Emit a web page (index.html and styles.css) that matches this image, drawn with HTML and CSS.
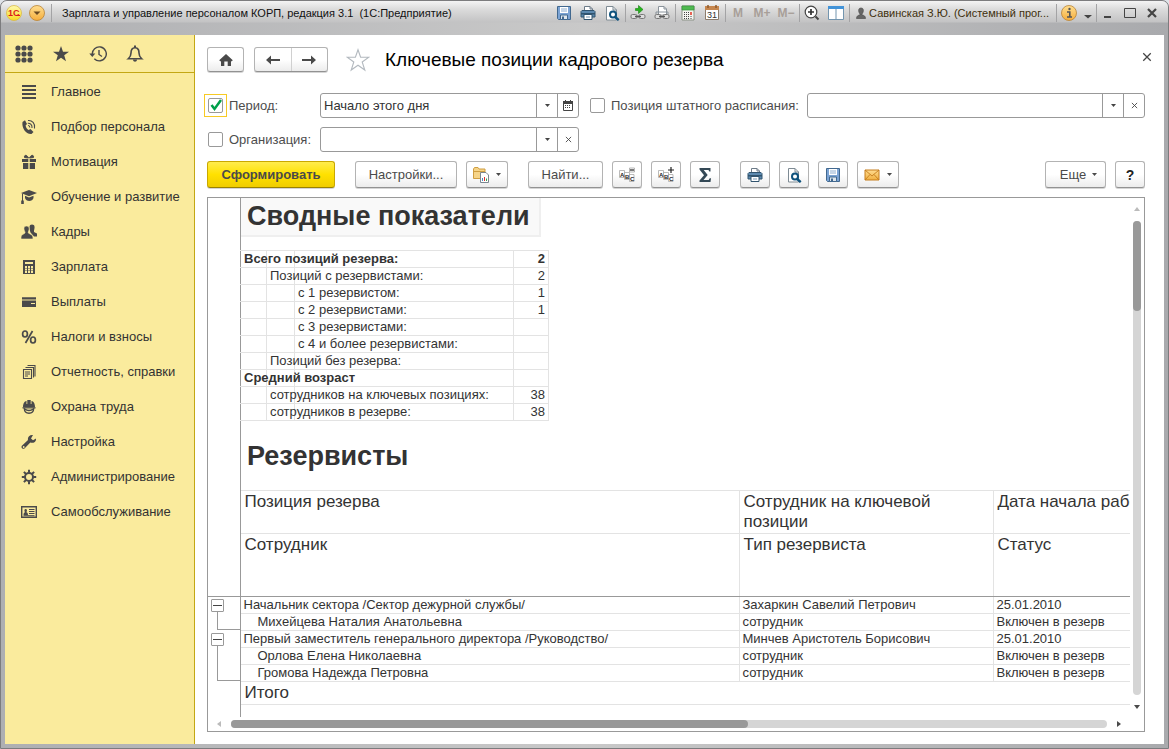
FILE: index.html
```html
<!DOCTYPE html>
<html lang="ru">
<head>
<meta charset="utf-8">
<title>Ключевые позиции кадрового резерва</title>
<link rel="stylesheet" href="styles.css">
</head>
<body>
<svg class="defs" aria-hidden="true">
  <defs>
    <linearGradient id="g-yellow" x2="0" y2="1"><stop offset="0" stop-color="#fffbb0"/><stop offset="1" stop-color="#f8d920"/></linearGradient>
    <linearGradient id="g-orange" x2="0" y2="1"><stop offset="0" stop-color="#ffdf91"/><stop offset="1" stop-color="#f5ad3c"/></linearGradient>
    <linearGradient id="g-mail" x2="0" y2="1"><stop offset="0" stop-color="#ffdc91"/><stop offset="1" stop-color="#f0b040"/></linearGradient>
  </defs>
  <symbol id="i-save" viewBox="0 0 16 16"><path d="M1.5 1.5h13v13h-12l-1-1z" fill="#7ba3d4" stroke="#41688f"/><path d="M4 2h8v6H4z" fill="#fff"/><path d="M5 4h6M5 6h6" stroke="#8daccf"/><path d="M4.500 10h7v4.500h-7z" fill="#dfe6ec" stroke="#41688f"/><path d="M6 11.500h2V14H6z" fill="#41688f"/></symbol>
  <symbol id="i-print" viewBox="0 0 16 16"><path d="M4.500 6V1.500H10L12.500 4v2" fill="#fff" stroke="#6c7b88"/><path d="M10 1.500V4h2.500" fill="none" stroke="#6c7b88"/><path d="M2 5.500h12l1 1V12H1V6.500z" fill="#5d8ab0" stroke="#31546f"/><path d="M1 8h14v1.500H1z" fill="#31546f"/><path d="M4 9.500h8v5H4z" fill="#fff" stroke="#31546f"/><path d="M6 12h4" stroke="#7b99b3"/></symbol>
  <symbol id="i-preview" viewBox="0 0 16 16"><path d="M2.500 15V1.500H9L12.500 5v10z" fill="#fff" stroke="#7e8b94"/><path d="M9 1.500V5h3.500" fill="none" stroke="#7e8b94"/><circle cx="9" cy="9.500" r="3" fill="#fff" stroke="#0e527d" stroke-width="2"/><path d="M11.200 12l3.500 3.200" stroke="#0e527d" stroke-width="2.400"/></symbol>
  <symbol id="i-link" viewBox="0 0 16 16"><rect x="1" y="9.500" width="6" height="4" rx="1.500" fill="#ddd" stroke="#777"/><rect x="9" y="9.500" width="6" height="4" rx="1.500" fill="#ddd" stroke="#777"/><path d="M5 11.500h6" stroke="#555" stroke-width="1.500"/></symbol>
  <symbol id="i-golink" viewBox="0 0 16 16"><path d="M5.500 3.500h3v-3l4.500 4-4.500 4v-3h-3z" fill="#25b51c" stroke="#168010" stroke-width=".6"/><use href="#i-link"/></symbol>
  <symbol id="i-doclink" viewBox="0 0 16 16"><path d="M4.500 9V1.500H10L12.500 4v5" fill="#fff" stroke="#8a939b"/><path d="M10 1.500V4h2.500M2 9.500V7h12v2.500" fill="none" stroke="#8a939b"/><use href="#i-link"/></symbol>
  <symbol id="i-calc" viewBox="0 0 16 16"><path d="M2 1h12v14H2z" fill="#f5f5f0" stroke="#8c9488"/><path d="M2 1h12v4H2z" fill="#4fba50" stroke="#3b9440" stroke-width=".7"/><path d="M4 7.500h5M4 9.500h5M4 11.500h5M4 13.500h5" stroke="#444" stroke-dasharray="1 1"/><path d="M11 7v3" stroke="#e03322" stroke-width="1.500"/><path d="M11 11v3" stroke="#444" stroke-dasharray="1 1"/></symbol>
  <symbol id="i-zoomin" viewBox="0 0 16 16"><circle cx="7" cy="7" r="5.800" fill="#fff" stroke="#444" stroke-width="1.200"/><path d="M4 7h6M7 4v6" stroke="#333" stroke-width="1.700"/><path d="M11.500 11.500l3 3" stroke="#444" stroke-width="2"/></symbol>
  <symbol id="i-split" viewBox="0 0 16 16"><path d="M.5 1.500h15v13H.5z" fill="#fff" stroke="#7395af"/><path d="M0 1h16v3H0z" fill="#4293d8"/><path d="M8 4v10.500" stroke="#7395af"/></symbol>
  <symbol id="i-user" viewBox="0 0 10 12"><path d="M5 1c3.500 0 2.500 4.500 1 6v1c2 .3 3.500 1 3.500 3.500H.5C.5 9 2 8.300 4 8V7C2.500 5.500 1.500 1 5 1z" fill="#666" stroke="#444" stroke-width=".6"/></symbol>
  <symbol id="i-grid" viewBox="0 0 18 18"><g fill="#4a4a4a"><circle cx="3" cy="3" r="2.600"/><circle cx="9" cy="3" r="2.600"/><circle cx="15" cy="3" r="2.600"/><circle cx="3" cy="9" r="2.600"/><circle cx="9" cy="9" r="2.600"/><circle cx="15" cy="9" r="2.600"/><circle cx="3" cy="15" r="2.600"/><circle cx="9" cy="15" r="2.600"/><circle cx="15" cy="15" r="2.600"/></g></symbol>
  <symbol id="i-star" viewBox="0 0 18 18"><path d="M9 1l2 5.700h6l-4.800 3.600L14 16.300 9 12.800l-5 3.500 1.800-6L1 6.700h6z" fill="#4a4a4a"/></symbol>
  <symbol id="i-history" viewBox="0 0 18 18"><path d="M3.300 9.500a7 7 0 1 1 2 4.300" fill="none" stroke="#4a4a4a" stroke-width="1.400"/><path d="M.3 8.500h6L3.300 12z" fill="#4a4a4a"/><path d="M10 5v4.500l3 2" fill="none" stroke="#4a4a4a" stroke-width="1.400"/></symbol>
  <symbol id="i-bell" viewBox="0 0 18 18"><path d="M9 2.700C5.500 2.700 5 5.500 5 8c0 3-1 4.300-2.700 5.800h13.400C14 12.300 13 11 13 8c0-2.500-.5-5.300-4-5.300z" fill="none" stroke="#4a4a4a" stroke-width="1.600"/><path d="M9 .5v2.500" stroke="#4a4a4a" stroke-width="2"/><path d="M7 14.500h4c0 3-4 3-4 0z" fill="#4a4a4a"/></symbol>
  <symbol id="i-lines" viewBox="0 0 16 16"><path d="M1 2h14M1 6h14M1 10h14M1 14h14" stroke="#4a4a4a" stroke-width="1.800"/></symbol>
  <symbol id="i-phone" viewBox="0 0 16 16"><path d="M1.500 3L4 1.300 6 5 4.600 6.500c.4 2 1.400 3.500 3 4.600L9.500 10l3 3-2 2C5 15.500.5 9 1.500 3z" fill="#4a4a4a"/><path d="M7 1.500c4-.5 7.500 3 6.500 8M6.800 4.200c2.500-.2 4.600 1.900 4.200 4.800M7 6.500c1 0 1.800.8 1.800 2" fill="none" stroke="#4a4a4a" stroke-width="1.100"/></symbol>
  <symbol id="i-gift" viewBox="0 0 16 16"><path d="M1 5h6.300v3H1zM8.700 5H15v3H8.700zM2 9h5.300v6H2zM8.700 9H14v6H8.700z" fill="#4a4a4a"/><path d="M7.500 4C6 .5 3 .5 3.500 3.500zM8.500 4c1.500-3.500 4.500-3.500 4-.5z" fill="#4a4a4a" stroke="#4a4a4a"/></symbol>
  <symbol id="i-cap" viewBox="0 0 16 16"><path d="M8 1l8 3-8 3.200L0 4z" fill="#4a4a4a"/><path d="M4 6.800L8 8.500l4.500-1.700V9c-1 4-7.500 4-8.500 0z" fill="#4a4a4a"/><path d="M1.500 4.500V12" stroke="#4a4a4a"/><path d="M.2 11.500h2.600V15H.2z" fill="#4a4a4a"/></symbol>
  <symbol id="i-people" viewBox="0 0 16 16"><path d="M9.500 8.500C8 4 8 .5 11 .5s3 3 2 6v1.500l3 1.500v3h-3z" fill="#4a4a4a"/><path d="M5.500 2c3 0 3.200 3 1.800 6v1l3.500 2c.8.500 1.200 2 1.200 4H0c0-2 .2-3.500 1-4l3-2V8C2.400 5 2.500 2 5.500 2z" fill="#4a4a4a" stroke="#faeb9d" stroke-width=".6"/></symbol>
  <symbol id="i-calculator" viewBox="0 0 16 16"><path d="M2 1h12v14H2z" fill="#4a4a4a"/><path d="M4 3h8v2H4zM4 7h2v2H4zM7 7h2v2H7zM10 7h2v2h-2zM4 9.500h2v2H4zM7 9.500h2v2H7zM10 9.500h2v2h-2zM4 12h2v2H4zM7 12h2v2H7zM10 12h2v2h-2z" fill="#faeb9d"/></symbol>
  <symbol id="i-card" viewBox="0 0 16 16"><path d="M1 3.200h14v2.300H1zM1 6.500h14V13H1z" fill="#4a4a4a"/><path d="M10 9.500h4" stroke="#faeb9d"/></symbol>
  <symbol id="i-percent" viewBox="0 0 16 16"><g fill="none" stroke="#4a4a4a" stroke-width="1.700"><ellipse cx="4" cy="5" rx="2.400" ry="3"/><ellipse cx="12" cy="11" rx="2.400" ry="3"/><path d="M11.500 2l-7 12"/></g></symbol>
  <symbol id="i-docs" viewBox="0 0 16 16"><path d="M2.500 5.500h8v9h-8zM4.500 3.500h8v10M6.500 1.500h7.500v11" fill="none" stroke="#4a4a4a" stroke-width="1.100"/><path d="M4 8h5M4 10h5M4 12h3" stroke="#4a4a4a"/></symbol>
  <symbol id="i-helmet" viewBox="0 0 16 16"><path d="M2 8c0-4 2-6 3.500-6v3h.8V1h3.400v4h.8V2C12 2 14 4 14 8z" fill="#4a4a4a"/><path d="M1.500 8.800h13" stroke="#4a4a4a" stroke-width="1.300"/><path d="M3.200 9c.3 7 9.300 7 9.600 0M4 10c2 2 6 2 8 0" fill="none" stroke="#4a4a4a" stroke-width="1.300"/></symbol>
  <symbol id="i-wrench" viewBox="0 0 16 16"><path d="M15 4.500l-3 1.700-2-1.800L12 1C8.500.5 6.300 3 7 6L.9 11.800c-1.300 1.600.8 4 2.600 2.700L9.300 8.600c3.200.9 6.200-1 5.700-4.100z" fill="#4a4a4a"/><circle cx="2.700" cy="13" r=".9" fill="#faeb9d"/></symbol>
  <symbol id="i-gear" viewBox="0 0 16 16"><circle cx="8" cy="8" r="4" fill="none" stroke="#4a4a4a" stroke-width="2"/><path d="M8 .8v3M8 12.200v3M.8 8h3M12.200 8h3M2.900 2.900L5 5M11 11l2.100 2.100M2.900 13.100L5 11M11 5l2.100-2.100" stroke="#4a4a4a" stroke-width="2"/></symbol>
  <symbol id="i-id" viewBox="0 0 16 16"><path d="M.7 2.700h14.600v10.600H.7z" fill="none" stroke="#4a4a4a" stroke-width="1.400"/><path d="M2.500 11c0-2 .8-2.500 1.500-2.700C3 6.500 3.300 5 4.700 5S6.400 6.500 5.400 8.300c.8.200 1.600.7 1.600 2.700z" fill="#4a4a4a"/><path d="M8 5.500h5.500M8 7.500h5.500M8 9.500h5.500M2.500 11.700h11" stroke="#4a4a4a"/></symbol>
  <symbol id="i-home" viewBox="0 0 16 16"><path d="M8 2l6.800 6.300-1.300 1.200-.5-.4V14H9.700V9.500H6.300V14H3V9.100l-.5.4-1.300-1.200z" fill="#4a4a4a"/></symbol>
  <symbol id="i-left" viewBox="0 0 16 16"><path d="M1 8l5-4.500V7h9v2H6v3.500z" fill="#4a4a4a"/></symbol>
  <symbol id="i-right" viewBox="0 0 16 16"><path d="M15 8l-5-4.500V7H1v2h9v3.500z" fill="#4a4a4a"/></symbol>
  <symbol id="i-fav" viewBox="0 0 24 24"><path d="M12 1.800l2.600 7.500h8.200L16.200 14l2.600 8L12 17.200 5.200 22l2.600-8L1.200 9.300h8.200z" fill="#fff" stroke="#b3b9bf" stroke-width="1.100"/></symbol>
  <symbol id="i-x" viewBox="0 0 8 8"><path d="M1 1l6 6M7 1L1 7" stroke="currentColor" fill="none"/></symbol>
  <symbol id="i-down" viewBox="0 0 5 3"><path d="M0 0h5L2.500 3z" fill="currentColor"/></symbol>
  <symbol id="i-calendar" viewBox="0 0 10 11"><path d="M.5 1.500h9v9h-9z" fill="#fff" stroke="#444"/><path d="M0 1h10v3H0z" fill="#444"/><path d="M2.500 0v2M7.500 0v2" stroke="#444"/><path d="M2 5.500h6M2 7.500h6" stroke="#444" stroke-dasharray="1 1"/></symbol>
  <symbol id="i-variant" viewBox="0 0 16 16"><path d="M.5 11.500V2l1-1.500H5l1 1.500h6v9.500z" fill="#f6d488" stroke="#cf9e42"/><path d="M.5 4.500h11.500" stroke="#cf9e42"/><path d="M7.500 5.500h5.500l2.500 2.500v7.500h-8z" fill="#fff" stroke="#7b8790"/><path d="M9.500 14v-3" stroke="#4b8cc4"/><path d="M11.500 14v-4" stroke="#d33"/><path d="M13.500 14v-2.500" stroke="#3a9d46"/></symbol>
  <symbol id="i-sum" viewBox="0 0 16 16"><path d="M2.500 1h11v3.500h-1.200L11.500 3H6.700l4 5-4.200 5h5.200l1-1.700h1.300L13.500 15h-11v-1.500L7 8.200 2.500 2.600z" fill="#344956"/></symbol>
  <symbol id="i-mail" viewBox="0 0 16 12"><path d="M1 1h14v10H1z" fill="url(#g-mail)" stroke="#c47c1c"/><path d="M1 1l7 6 7-6M1 11l5-5.500M15 11l-5-5.500" fill="none" stroke="#c47c1c" stroke-width=".9"/></symbol>
</svg>
<div class="window">
  <header class="titlebar">
    <button class="round" aria-label="Меню приложения"><svg width="16" height="16" viewBox="0 0 16 16"><circle cx="8" cy="8" r="7.500" fill="url(#g-yellow)" stroke="#d9b53a" stroke-width=".7"/><text x="2" y="11" class="svg-logo">1С</text><path d="M10 10.500h4" stroke="#dc1b1b"/></svg></button>
    <button class="round" aria-label="Главное меню"><svg width="16" height="16" viewBox="0 0 16 16"><circle cx="8" cy="8" r="7.500" fill="url(#g-orange)" stroke="#b98335" stroke-width=".8"/><path d="M4.500 6.500h7L8 10z" fill="#6b4a22"/></svg></button>
    <i class="sep"></i>
    <span class="app-title">Зарплата и управление персоналом КОРП, редакция 3.1&nbsp; (1С:Предприятие)</span>
    <div class="tools">
      <button class="tool" aria-label="Сохранить"><svg width="16" height="16"><use href="#i-save"/></svg></button>
      <button class="tool" aria-label="Печать"><svg width="16" height="16"><use href="#i-print"/></svg></button>
      <button class="tool" aria-label="Просмотр"><svg width="16" height="16"><use href="#i-preview"/></svg></button>
      <i class="sep"></i>
      <button class="tool" aria-label="Перейти по ссылке"><svg width="16" height="16"><use href="#i-golink"/></svg></button>
      <button class="tool" aria-label="Получить ссылку"><svg width="16" height="16"><use href="#i-doclink"/></svg></button>
      <i class="sep"></i>
      <button class="tool" aria-label="Калькулятор"><svg width="16" height="16"><use href="#i-calc"/></svg></button>
      <button class="tool" aria-label="Календарь"><svg width="16" height="16" viewBox="0 0 16 16"><path d="M1.500 2.500h13v12h-13z" fill="#fff" stroke="#8c7c6c"/><path d="M1 1h14v4H1z" fill="#c6864e"/><path d="M4 0v3M12 0v3" stroke="#8a5a2f" stroke-width="1.500"/><text x="8" y="13" text-anchor="middle" class="svg-day">31</text></svg></button>
      <i class="sep"></i>
      <button class="tool mem">M</button>
      <button class="tool mem">M+</button>
      <button class="tool mem">M−</button>
      <i class="sep"></i>
      <button class="tool" aria-label="Масштаб"><svg width="16" height="16"><use href="#i-zoomin"/></svg></button>
      <button class="tool" aria-label="Панели"><svg width="16" height="16"><use href="#i-split"/></svg></button>
      <i class="sep"></i>
      <button class="user"><svg width="10" height="12"><use href="#i-user"/></svg><span>Савинская З.Ю. (Системный прог...</span></button>
      <i class="sep"></i>
      <button class="tool info" aria-label="Справка"><svg width="16" height="16" viewBox="0 0 16 16"><circle cx="8" cy="8" r="7.500" fill="url(#g-orange)" stroke="#b98335" stroke-width=".8"/><path d="M6 7h2.800v4.500M6 12h5" stroke="#555" stroke-width="1.600" fill="none"/><circle cx="8.500" cy="4" r="1.200" fill="#555"/></svg></button>
      <button class="tool more" aria-label="Ещё"><svg width="8" height="12" viewBox="0 0 8 12"><path d="M0 8h8l-4 3.500z" fill="#444"/></svg></button>
      <i class="sep"></i>
      <button class="tool win" aria-label="Свернуть"><svg width="12" height="12" viewBox="0 0 12 12"><path d="M2 10h7" stroke="#444" stroke-width="2"/></svg></button>
      <button class="tool win" aria-label="Развернуть"><svg width="12" height="12" viewBox="0 0 12 12"><path d="M.5 1.500h11v9H.5z" fill="none" stroke="#444"/></svg></button>
      <button class="tool win" aria-label="Закрыть"><svg width="12" height="12" viewBox="0 0 12 12"><path d="M2 2l8 8M10 2l-8 8" stroke="#444" stroke-width="2.200"/></svg></button>
    </div>
  </header>
  <div class="body">
    <aside class="sidebar">
      <div class="quick">
        <button aria-label="Разделы"><svg width="18" height="18"><use href="#i-grid"/></svg></button>
        <button aria-label="Избранное"><svg width="18" height="18"><use href="#i-star"/></svg></button>
        <button aria-label="История"><svg width="18" height="18"><use href="#i-history"/></svg></button>
        <button aria-label="Оповещения"><svg width="18" height="18"><use href="#i-bell"/></svg></button>
      </div>
      <nav class="menu">
        <a href="#"><svg width="16" height="16"><use href="#i-lines"/></svg>Главное</a>
        <a href="#"><svg width="16" height="16"><use href="#i-phone"/></svg>Подбор персонала</a>
        <a href="#"><svg width="16" height="16"><use href="#i-gift"/></svg>Мотивация</a>
        <a href="#"><svg width="16" height="16"><use href="#i-cap"/></svg>Обучение и развитие</a>
        <a href="#"><svg width="16" height="16"><use href="#i-people"/></svg>Кадры</a>
        <a href="#"><svg width="16" height="16"><use href="#i-calculator"/></svg>Зарплата</a>
        <a href="#"><svg width="16" height="16"><use href="#i-card"/></svg>Выплаты</a>
        <a href="#"><svg width="16" height="16"><use href="#i-percent"/></svg>Налоги и взносы</a>
        <a href="#"><svg width="16" height="16"><use href="#i-docs"/></svg>Отчетность, справки</a>
        <a href="#"><svg width="16" height="16"><use href="#i-helmet"/></svg>Охрана труда</a>
        <a href="#"><svg width="16" height="16"><use href="#i-wrench"/></svg>Настройка</a>
        <a href="#"><svg width="16" height="16"><use href="#i-gear"/></svg>Администрирование</a>
        <a href="#"><svg width="16" height="16"><use href="#i-id"/></svg>Самообслуживание</a>
      </nav>
    </aside>
    <main class="main">
      <div class="head">
        <button class="btn home" aria-label="Домой"><svg width="16" height="16"><use href="#i-home"/></svg></button>
        <div class="pair">
          <button aria-label="Назад"><svg width="16" height="16"><use href="#i-left"/></svg></button>
          <button aria-label="Вперёд"><svg width="16" height="16"><use href="#i-right"/></svg></button>
        </div>
        <button class="fav" aria-label="В избранное"><svg width="24" height="24"><use href="#i-fav"/></svg></button>
        <h1>Ключевые позиции кадрового резерва</h1>
        <button class="close" aria-label="Закрыть"><svg width="10" height="10"><use href="#i-x"/></svg></button>
      </div>
      <div class="filters">
        <div class="check"><span class="focus"><input type="checkbox" id="period" checked></span><label for="period">Период:</label></div>
        <div class="combo"><input type="text" aria-label="Период" value="Начало этого дня"><button aria-label="Выбрать"><svg width="5" height="3"><use href="#i-down"/></svg></button><button aria-label="Календарь"><svg width="10" height="11"><use href="#i-calendar"/></svg></button></div>
        <div class="check"><span><input type="checkbox" id="position"></span><label for="position">Позиция штатного расписания:</label></div>
        <div class="combo"><input type="text" aria-label="Позиция штатного расписания"><button aria-label="Выбрать"><svg width="5" height="3"><use href="#i-down"/></svg></button><button aria-label="Очистить"><svg width="7" height="7"><use href="#i-x"/></svg></button></div>
        <div class="check"><span><input type="checkbox" id="org"></span><label for="org">Организация:</label></div>
        <div class="combo"><input type="text" aria-label="Организация"><button aria-label="Выбрать"><svg width="5" height="3"><use href="#i-down"/></svg></button><button aria-label="Очистить"><svg width="7" height="7"><use href="#i-x"/></svg></button></div>
      </div>
      <div class="toolbar">
        <div class="group"><button class="btn primary">Сформировать</button></div>
        <div class="group">
          <button class="btn settings">Настройки...</button>
          <button class="btn drop" aria-label="Варианты"><svg width="16" height="16"><use href="#i-variant"/></svg><svg width="5" height="3"><use href="#i-down"/></svg></button>
        </div>
        <div class="group">
          <button class="btn find">Найти...</button>
          <button class="btn square" aria-label="Свернуть"><svg width="16" height="16" viewBox="0 0 16 16"><path d="M.5 3.500h5v7h-5zM5.500 5.500h5v7h-5zM10.500 7.500h4.500v7h-4.500z" fill="#fff" stroke="#aaa" stroke-width=".8"/><g class="svg-abc"><text x="1" y="9.500">A</text><text x="6" y="11.500">B</text><text x="11" y="13.500">C</text></g><path d="M10.500 1h5v4h-5z" fill="#fff" stroke="#999" stroke-width=".7"/><path d="M11 3h4" stroke="#222" stroke-width="1.200"/></svg></button>
          <button class="btn square" aria-label="Развернуть"><svg width="16" height="16" viewBox="0 0 16 16"><path d="M.5 3.500h5v7h-5zM5.500 5.500h5v7h-5zM10.500 7.500h4.500v7h-4.500z" fill="#fff" stroke="#aaa" stroke-width=".8"/><g class="svg-abc"><text x="1" y="9.500">A</text><text x="6" y="11.500">B</text><text x="11" y="13.500">C</text></g><path d="M10 3h6M13 0v6" stroke="#222" stroke-width="1.200"/></svg></button>
          <button class="btn square" aria-label="Сумма"><svg width="16" height="16"><use href="#i-sum"/></svg></button>
        </div>
        <div class="group">
          <button class="btn square" aria-label="Печать"><svg width="16" height="16"><use href="#i-print"/></svg></button>
          <button class="btn square" aria-label="Просмотр"><svg width="16" height="16"><use href="#i-preview"/></svg></button>
          <button class="btn square" aria-label="Сохранить"><svg width="16" height="16"><use href="#i-save"/></svg></button>
          <button class="btn drop" aria-label="Отправить"><svg width="16" height="12"><use href="#i-mail"/></svg><svg width="5" height="3"><use href="#i-down"/></svg></button>
        </div>
        <div class="group end">
          <button class="btn more-btn">Еще<svg width="5" height="3"><use href="#i-down"/></svg></button>
          <button class="btn square help">?</button>
        </div>
      </div>
      <section class="report">
        <div class="sheet">
          <h2 class="selected">Сводные показатели</h2>
          <table class="summary">
            <colgroup><col class="c1"><col class="c2"><col class="c3"><col class="c4"></colgroup>
            <tr class="bold"><td>Всего позиций резерва:</td><td></td><td></td><td>2</td></tr>
            <tr><td></td><td>Позиций с резервистами:</td><td></td><td>2</td></tr>
            <tr><td></td><td></td><td>с 1 резервистом:</td><td>1</td></tr>
            <tr><td></td><td></td><td>с 2 резервистами:</td><td>1</td></tr>
            <tr><td></td><td></td><td>с 3 резервистами:</td><td></td></tr>
            <tr><td></td><td></td><td>с 4 и более резервистами:</td><td></td></tr>
            <tr><td></td><td>Позиций без резерва:</td><td></td><td></td></tr>
            <tr class="bold"><td>Средний возраст</td><td></td><td></td><td></td></tr>
            <tr><td></td><td>сотрудников на ключевых позициях:</td><td></td><td>38</td></tr>
            <tr><td></td><td>сотрудников в резерве:</td><td></td><td>38</td></tr>
          </table>
          <h2>Резервисты</h2>
          <table class="reserve">
            <colgroup><col class="gut"><col class="pos"><col class="emp"><col></colgroup>
            <thead>
              <tr class="h1"><td></td><th>Позиция резерва</th><th>Сотрудник на ключевой позиции</th><th class="clip">Дата начала работы</th></tr>
              <tr class="h2"><td></td><th>Сотрудник</th><th>Тип резервиста</th><th>Статус</th></tr>
            </thead>
            <tbody>
              <tr><td class="tree" rowspan="2"><div class="branch"><button aria-label="Свернуть группу"></button><i></i></div></td><td>Начальник сектора /Сектор дежурной службы/</td><td>Захаркин Савелий Петрович</td><td>25.01.2010</td></tr>
              <tr class="child"><td>Михейцева Наталия Анатольевна</td><td>сотрудник</td><td>Включен в резерв</td></tr>
            </tbody>
            <tbody>
              <tr><td class="tree" rowspan="3"><div class="branch tall"><button aria-label="Свернуть группу"></button><i></i></div></td><td>Первый заместитель генерального директора /Руководство/</td><td>Минчев Аристотель Борисович</td><td>25.01.2010</td></tr>
              <tr class="child"><td>Орлова Елена Николаевна</td><td>сотрудник</td><td>Включен в резерв</td></tr>
              <tr class="child"><td>Громова Надежда Петровна</td><td>сотрудник</td><td>Включен в резерв</td></tr>
            </tbody>
            <tfoot><tr><td></td><td colspan="3">Итого</td></tr></tfoot>
          </table>
        </div>
        <div class="vbar"><svg width="6" height="4" viewBox="0 0 6 4"><path d="M0 4h6L3 0z" fill="#bbb"/></svg><div class="track"><div class="thumb"></div></div><svg width="6" height="4" viewBox="0 0 6 4"><path d="M0 0h6L3 4z" fill="#4a4a4a"/></svg></div>
        <div class="hbar"><svg width="4" height="6" viewBox="0 0 4 6"><path d="M4 0v6L0 3z" fill="#bbb"/></svg><div class="track"><div class="thumb"></div></div><svg width="4" height="6" viewBox="0 0 4 6"><path d="M0 0v6l4-3z" fill="#4a4a4a"/></svg></div>
      </section>
    </main>
  </div>
</div>
</body>
</html>
```
FILE: styles.css
```css
* { box-sizing: border-box; }
body { margin: 0; background: #dfe3e8; font: 13px/16px "Liberation Sans", Arial, sans-serif; color: #333; }
button, input { font: inherit; color: inherit; }
button { padding: 0; border: 0; background: none; display: flex; align-items: center; justify-content: center; }
svg { display: block; flex: none; }
.defs { position: absolute; width: 0; height: 0; }
.svg-day { font: 9px "Liberation Sans", sans-serif; fill: #333; }
.svg-abc { font: bold 6px "Liberation Sans", sans-serif; fill: #222; }
.svg-logo { font: bold 9px "Liberation Sans", sans-serif; fill: #dc1b1b; }

.window { display: flex; flex-direction: column; min-height: 100vh; padding: 0 4px 4px; border: 1px solid #7c7c7e; border-radius: 7px 7px 0 0; background: linear-gradient(90deg, #aeafb2, #c9c9c9 50%, #a9aaad); }

.titlebar { display: flex; align-items: center; height: 34px; padding-bottom: 10px; margin: 0 -4px; padding-left: 5px; background: linear-gradient(#f4f4f4 0, #dcdcdc 8px, #c3c3c4 21px, transparent 22px); border-radius: 6px 6px 0 0; }
.round { width: 16px; margin-right: 7px; }
.sep { flex: none; width: 1px; height: 18px; margin-left: 1px; background: #a3a3a5; }
.round + .sep { margin: 0 10px 0 -1px; }
.app-title { flex: 1 1 0; min-width: 0; overflow: hidden; white-space: nowrap; color: #111; font-size: 11px; }
.tools { display: flex; align-items: center; padding-right: 5px; }
.tool { width: 24px; height: 20px; }
.mem { font-weight: bold; font-size: 12px; color: #a89f99; }
.user { gap: 3px; padding: 0 6px; color: #3e2f0c; font-size: 11px; white-space: nowrap; }
.more { width: 14px; }
.win { width: 22px; }

.body { flex: 1; display: flex; }
.sidebar { flex: none; width: 190px; background: #faeb9d; border-right: 1px solid #c3a714; }
.quick { display: flex; align-items: center; gap: 19px; height: 38px; padding-left: 10px; border-bottom: 1px solid #c3a714; }
.menu { padding-top: 1px; }
.menu a { display: flex; align-items: center; gap: 14px; height: 35px; padding-left: 16px; color: #333; text-decoration: none; white-space: nowrap; }

.main { flex: 1; min-width: 0; display: flex; flex-direction: column; padding: 12px 19px 12px 12px; background: #fff; }
.head { display: flex; align-items: center; height: 25px; margin-bottom: 21px; }
.btn, .pair { height: 27px; border: 1px solid #b3b3b3; border-bottom-color: #929292; border-radius: 3px; background: linear-gradient(#fff 50%, #ececec); box-shadow: 0 1px 0 #d5d5d5; color: #4a4a4a; white-space: nowrap; }
.head .btn, .pair { height: 25px; }
.home { width: 37px; margin-right: 10px; }
.pair { display: flex; width: 74px; }
.pair button { flex: 1; }
.pair button + button { border-left: 1px solid #d0d0d0; }
.fav { margin: 0 15px 0 18px; }
h1 { flex: 1; margin: 0; font-size: 19px; line-height: 24px; font-weight: normal; color: #000; white-space: nowrap; }
.close { color: #444; margin: -6px -7px 0 0; }

.filters { display: grid; grid-template-columns: 113px 259px 228px minmax(0, 1fr); row-gap: 9px; }
.check { display: flex; align-items: center; height: 25px; color: #4d4d4d; white-space: nowrap; }
.check span { display: flex; padding: 0 6px 0 1px; }
.combo + .check span { padding-left: 11px; }
.check:nth-child(5) span { padding-left: 1px; }
.check .focus { padding: 3px; margin: 0 2px 0 -3px; border: 1px solid #f7ca24; }
.check input { appearance: none; width: 15px; height: 15px; margin: 0; border: 1px solid #999; border-radius: 2px; background: #fff; }
.check input:checked { background: #fff url("data:image/svg+xml,%3Csvg xmlns='http://www.w3.org/2000/svg' viewBox='0 0 13 13'%3E%3Cpath d='M2.500 6l3 4L12 1' fill='none' stroke='%2300a04a' stroke-width='2.500'/%3E%3C/svg%3E") center / 13px no-repeat; }
.combo { display: flex; height: 25px; border: 1px solid #999; border-radius: 3px; background: #fff; }
.combo input { flex: 1; min-width: 0; padding: 0 3px; border: 0; background: none; outline: 0; }
.combo button { width: 21px; border-left: 1px solid #999; color: #444; }

.toolbar { display: flex; gap: 20px; margin: 9px 0; }
.group { display: flex; gap: 9px; }
.end { margin-left: auto; }
.primary { width: 128px; font-weight: bold; border-color: #c9a800; border-bottom-color: #9a8200; background: linear-gradient(#ffec4d, #ffe100 50%, #f0cd00); }
.settings { width: 102px; }
.find { width: 75px; }
.drop { width: 42px; gap: 7px; }
.square { width: 30px; }
.more-btn { width: 61px; gap: 6px; padding-left: 6px; }
.help { font-weight: bold; font-size: 14px; color: #222; }

.report { flex: 1; display: grid; grid-template: minmax(0, 1fr) 14px / minmax(0, 1fr) 14px; border: 1px solid #999; }
.sheet { overflow: hidden; background: linear-gradient(#999, #999) 32px 0 / 1px 100% no-repeat; }
h2 { margin: 16px 0 15px 33px; padding: 0 6px; font-size: 27px; line-height: 38px; color: #333; }
.selected { width: max-content; margin: 0 0 13px 33px; padding: 1px 9px 2px 6px; line-height: 34px; background: #f9f9f9; border: solid #efefef; border-width: 0 2px 2px 0; }
table { border-collapse: collapse; table-layout: fixed; }
td, th { height: 17px; padding: 0 3px; line-height: 16px; text-align: left; white-space: nowrap; border: 1px solid #e3e3e3; }
.summary { width: 309px; margin-left: 32px; }
.summary td:first-child { border-left: 1px solid #999; }
.bold { font-weight: bold; }
.summary td:last-child { text-align: right; }
.c1 { width: 26px; } .c2 { width: 28px; } .c3 { width: 219px; } .c4 { width: 35px; }

.reserve { width: 100%; }
.gut { width: 32px; } .pos { width: 499px; } .emp { width: 254px; }
.reserve td:last-child, .reserve th:last-child { border-right: 0; }
.reserve tr > td:first-child { border-left: 0; }
.reserve thead td { border: 0; border-right: 1px solid #999; }
.reserve th { padding: 1px 4px; font-size: 17px; line-height: 20px; font-weight: normal; vertical-align: top; white-space: normal; }
.reserve th.clip { overflow: hidden; white-space: nowrap; }
.reserve .h1 > * { height: 43px; }
.reserve .h2 > * { height: 63px; border-bottom: 1px solid #999; }
.reserve th:nth-child(2), .reserve td.tree + td { border-left: 1px solid #999; }
.reserve .child td:first-child { padding-left: 17px; border-left: 1px solid #999; }
.reserve .tree { padding: 0; border: 0; border-right: 1px solid #999; vertical-align: top; }
.branch { display: flex; flex-direction: column; height: 33px; padding: 2px 0 0 3px; }
.tall { height: 50px; }
.branch button { flex: none; width: 13px; height: 13px; border: 1px solid #999; border-radius: 1px; background: linear-gradient(#444, #444) center / 9px 1px no-repeat #fff; }
.branch i { flex: 1; margin-left: 6px; border: solid #999; border-width: 0 0 1px 1px; }
.reserve tfoot td { height: 23px; padding-left: 4px; font-size: 17px; line-height: 20px; }
.reserve tfoot td:first-child { border: 0; border-right: 1px solid #999; }

.vbar, .hbar { display: flex; align-items: center; }
.vbar { flex-direction: column; padding: 9px 0 8px; gap: 10px; }
.hbar { padding: 0 9px; gap: 10px; }
.track { flex: 1; border-radius: 4px; background: #d5d5d5; }
.vbar .track { width: 8px; }
.hbar .track { height: 8px; }
.thumb { border-radius: 4px; background: #999; }
.vbar .thumb { height: 19%; }
.hbar .thumb { width: 59%; height: 8px; }
```
